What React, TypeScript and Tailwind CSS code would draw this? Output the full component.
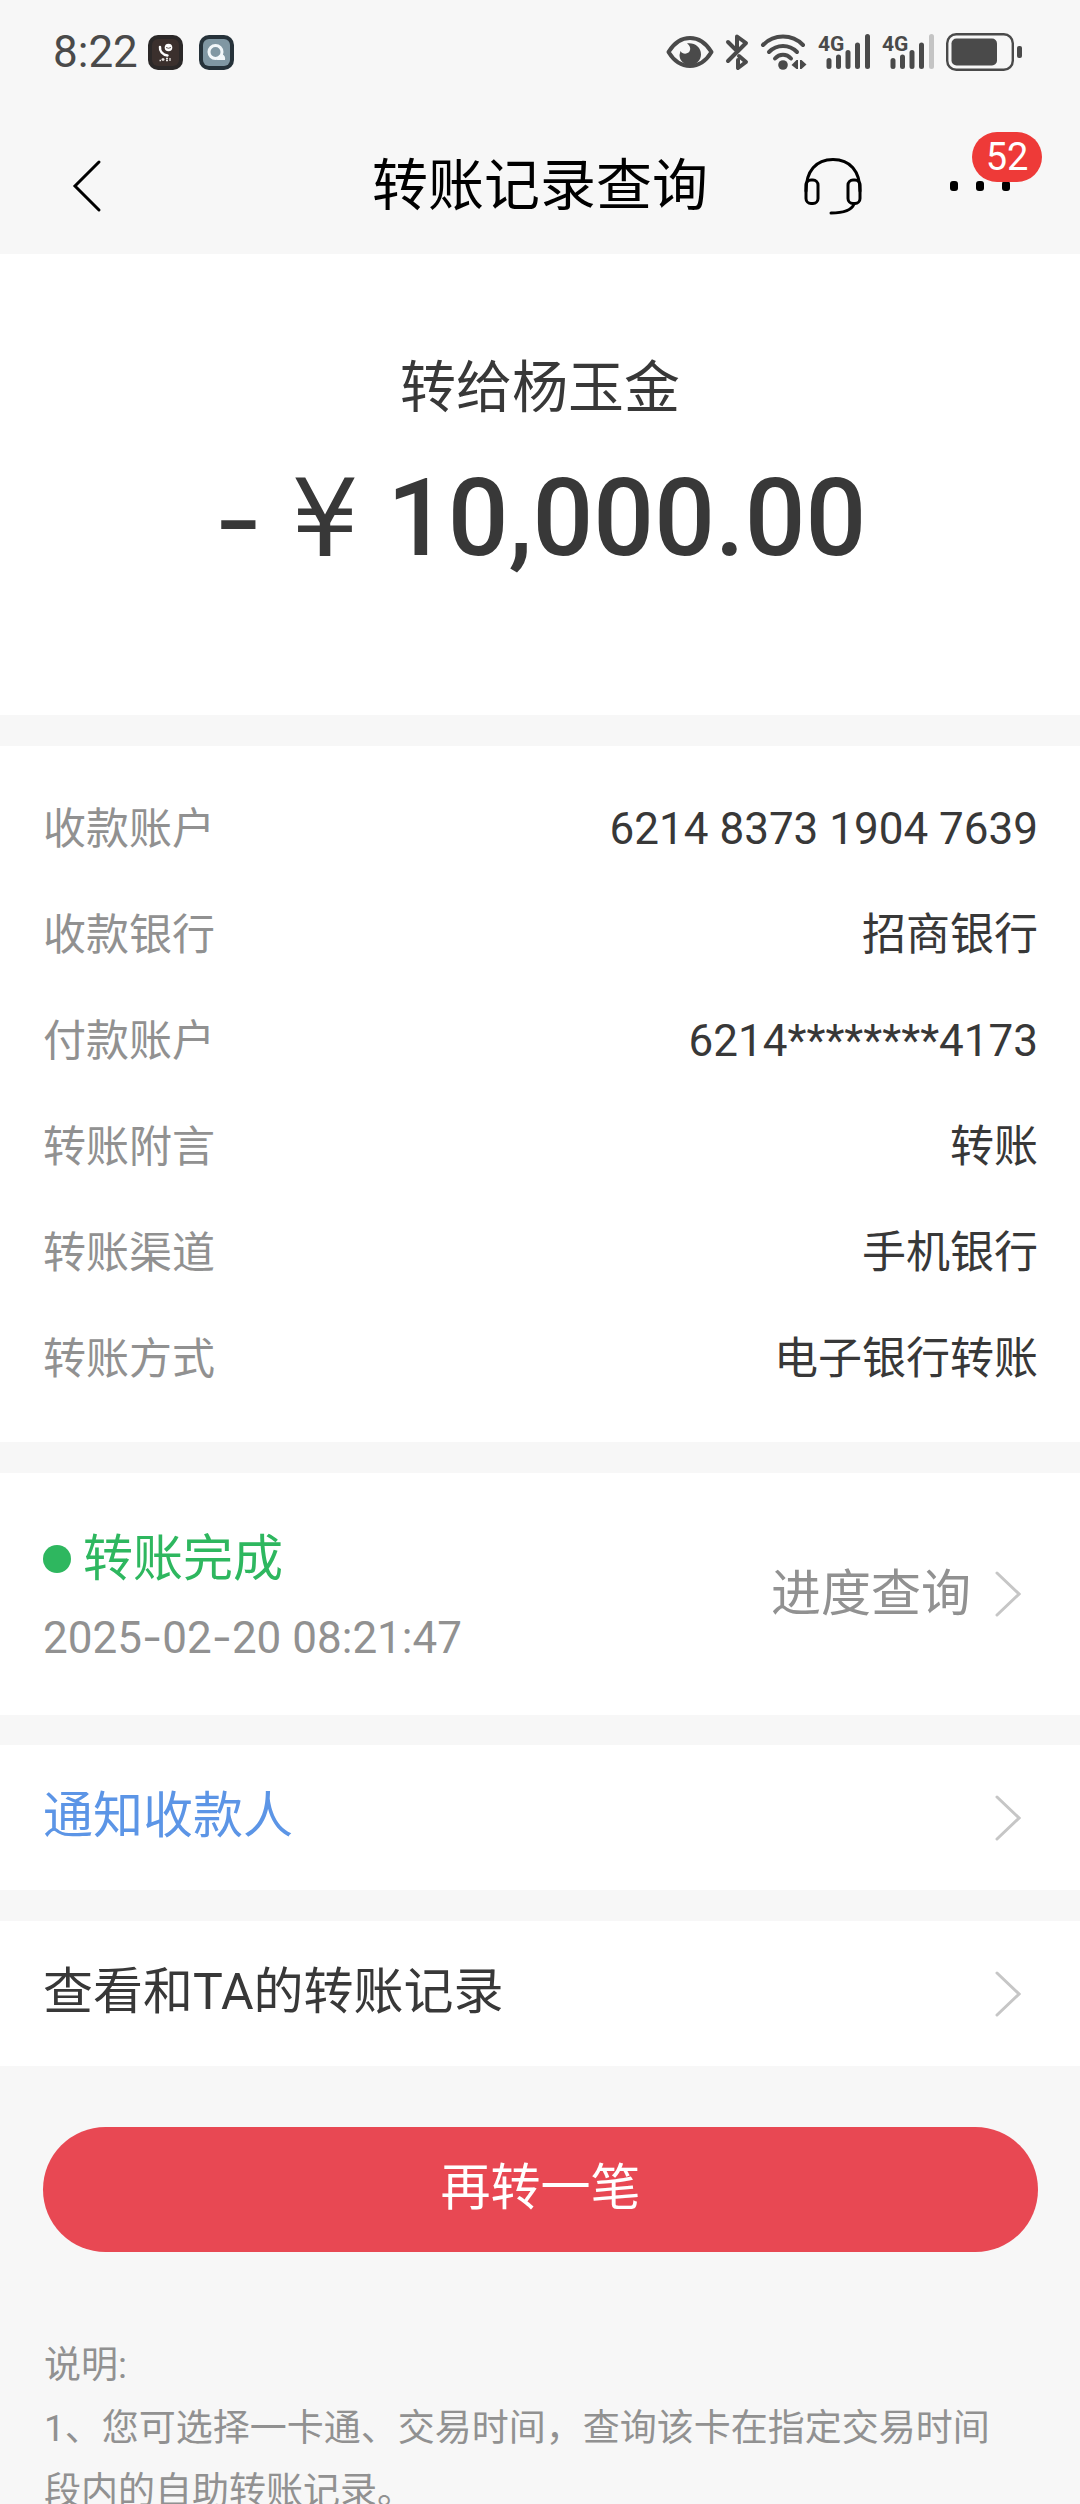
import type { ReactNode } from 'react';

const details = [
  { label: '收款账户', value: '6214 8373 1904 7639' },
  { label: '收款银行', value: '招商银行' },
  { label: '付款账户', value: '6214********4173' },
  { label: '转账附言', value: '转账' },
  { label: '转账渠道', value: '手机银行' },
  { label: '转账方式', value: '电子银行转账' },
];

function CallAppIcon() {
  return (
    <svg className="w-[35px] h-[35px]" viewBox="0 0 35 35" fill="none">
      <rect width="35" height="35" rx="10" fill="#2b2828" />
      <rect x="4" y="4" width="27" height="27" rx="6" fill="#3b302d" />
      <path d="M12 12c-.5 4 2.500 8 7.500 8.500" stroke="#fff" strokeWidth="2.500" strokeLinecap="round" />
      <circle cx="20.500" cy="12.500" r="3.800" fill="#fff" />
      <path d="M18 12.500q2.500 1.500 5 0" stroke="#3b302d" strokeWidth="0.800" />
      <path d="M11.500 25.500h1.500M15 23v3M13.500 24.500h3M18 23.500h2M18 25.500h2M22 23v3" stroke="#e8e4e2" strokeWidth="1.300" />
    </svg>
  );
}

function ChatAppIcon() {
  return (
    <svg className="w-[35px] h-[35px]" viewBox="0 0 35 35" fill="none">
      <rect width="35" height="35" rx="10" fill="#26323a" />
      <rect x="4" y="4" width="27" height="27" rx="6" fill="#8097a3" />
      <circle cx="16.500" cy="17" r="6.500" stroke="#f2f7fa" strokeWidth="3" />
      <path d="M18 25c0-3.500 2.500-6 5.500-5.500 2 .5 3 3 2.500 5.500z" fill="#f2f7fa" />
    </svg>
  );
}

function EyeIcon() {
  return (
    <svg className="w-[48px] h-[34px]" viewBox="0 0 48 34" fill="none">
      <path
        d="M2.500 17C8 8 15.500 3 24 3s16 5 21.500 14C40 26 32.500 31 24 31S8 26 2.500 17z"
        stroke="#4a4a4a"
        strokeWidth="4"
        strokeLinejoin="round"
      />
      <path d="M21 8.500c8-1 14 4 14 11 0 5.500-4.500 10.500-11 10.500-6 0-10.500-4.500-10.500-10l1-4c1.500 2.800 5.500 3.500 8 1.500s2.500-6.500-1.500-9z" fill="#4a4a4a" />
    </svg>
  );
}

function BluetoothIcon() {
  return (
    <svg className="w-[24px] h-[38px]" viewBox="0 0 24 38" fill="none" stroke="#4a4a4a" strokeWidth="4" strokeLinecap="round" strokeLinejoin="round">
      <path d="M3 9l9 9V3.500L21 10 3 28" />
      <path d="M14 23l7 6-8 6v-8" />
    </svg>
  );
}

function WifiIcon() {
  return (
    <svg className="w-[47px] h-[38px]" viewBox="0 0 47 38" fill="none">
      <g stroke="#4a4a4a" strokeWidth="4" strokeLinecap="round">
        <path d="M3 12C14 .8 32 .8 43 12" />
        <path d="M9 19c8-8 20-8 28 0" />
        <path d="M15 25.500c4.500-5 11.500-5 16 0" />
      </g>
      <circle cx="23" cy="32" r="4.800" fill="#4a4a4a" />
      <path d="M38 27v9h-1.500l-5-4 5-5zM40 27h1.500l5 4.500-5 4.500H40z" fill="#4a4a4a" />
    </svg>
  );
}

function SignalIcon({ lastBar }: { lastBar: string }) {
  return (
    <svg className="w-[53px] h-[38px] overflow-visible" viewBox="0 0 53 38" fill="none" strokeWidth="5" strokeLinecap="round">
      <text x="0" y="18" fill="#4a4a4a" className="font-['Roboto',sans-serif] text-[21px] font-bold">
        4G
      </text>
      <path d="M11 27.500v6M20.500 24v9.500M30 19.500v14M39.500 12v21.500" stroke="#4a4a4a" />
      <path d="M49.500 3.500v30" stroke={lastBar} />
    </svg>
  );
}

function BatteryIcon() {
  return (
    <svg className="w-[76px] h-[38px]" viewBox="0 0 76 38" fill="none">
      <rect x="1.200" y="1.200" width="65.600" height="35.600" rx="9" stroke="#4a4a4a" strokeWidth="2.400" />
      <rect x="5.500" y="5.500" width="45.500" height="27" rx="5" fill="#4a4a4a" />
      <rect x="71" y="13" width="5" height="12" rx="2" fill="#4a4a4a" />
    </svg>
  );
}

function HeadsetIcon() {
  return (
    <svg className="w-[58px] h-[58px]" viewBox="0 0 58 58" fill="none" stroke="#000" strokeWidth="3" strokeLinecap="round">
      <path d="M2 34C2 14 12 2.500 29 2.500S56 14 56 34" />
      <rect x="2" y="23" width="12" height="23.500" rx="5" />
      <rect x="44" y="23" width="12" height="23.500" rx="5" />
      <path d="M50 47c-2.500 6.500-10 9-23 9" />
    </svg>
  );
}

function Chevron() {
  return (
    <svg className="w-[26px] h-[46px] shrink-0" viewBox="0 0 26 46" fill="none" stroke="#c6c6c6" strokeWidth="3" strokeLinecap="round">
      <path d="M2 2l22 21L2 44" />
    </svg>
  );
}

// Inter has the wide, thin hyphen used between numbers
function Dash() {
  return <span className="font-['Inter',sans-serif] font-normal">-</span>;
}

function LinkRow({ className, children }: { className: string; children: ReactNode }) {
  return (
    <a href="#" className={`flex items-center justify-between bg-white h-[145px] pl-[43px] pr-[59px] ${className}`}>
      <span className="text-[50px] leading-[74px] pb-1">{children}</span>
      <Chevron />
    </a>
  );
}

export default function App() {
  return (
    <div className="h-screen flex flex-col overflow-hidden bg-[#f7f7f7] text-[#383838] font-['Roboto','Noto_Sans_CJK_SC',sans-serif]">
      {/* Status bar */}
      <div className="h-[104px] shrink-0 flex items-center justify-between pl-[53px] pr-[58px]">
        <div className="flex items-center">
          <span className="text-[44px] leading-[52px] text-[#4a4a4a]">8:22</span>
          <div className="flex gap-4 ml-[10px]">
            <CallAppIcon />
            <ChatAppIcon />
          </div>
        </div>
        <div className="flex items-center gap-[11px]">
          <EyeIcon />
          <BluetoothIcon />
          <WifiIcon />
          <SignalIcon lastBar="#4a4a4a" />
          <SignalIcon lastBar="#c4c4c4" />
          <BatteryIcon />
        </div>
      </div>

      {/* Nav bar */}
      <header className="h-[150px] shrink-0 grid grid-cols-[1fr_auto_1fr] items-center px-[70px] pt-[14px] text-black">
        <button type="button" aria-label="返回" className="justify-self-start">
          <svg className="w-[34px] h-[54px]" viewBox="0 0 34 54" fill="none" stroke="#000" strokeWidth="3" strokeLinecap="round">
            <path d="M29 3L5 27l24 24" />
          </svg>
        </button>
        <h1 className="text-[56px] leading-[84px]">转账记录查询</h1>
        <div className="flex items-center justify-self-end gap-[88px]">
          <button type="button" aria-label="客服">
            <HeadsetIcon />
          </button>
          <button type="button" aria-label="更多" className="relative flex gap-[18px] h-[58px] items-center">
            <span className="w-2 h-[10px] rounded-[3px] bg-black" />
            <span className="w-2 h-[10px] rounded-[3px] bg-black" />
            <span className="w-2 h-[10px] rounded-[3px] bg-black" />
            <span className="absolute left-[22px] -top-[25px] w-[70px] h-[50px] rounded-full bg-[#ee3a38] text-white text-[38px] leading-[50px] text-center">
              52
            </span>
          </button>
        </div>
      </header>

      <main className="flex-1 min-h-0 overflow-y-auto [scrollbar-width:none]">
        {/* Amount */}
        <section className="h-[461px] bg-white pt-[92px] text-center">
          <h2 className="text-[56px] leading-[84px]">转给杨玉金</h2>
          <p className="flex justify-center items-center gap-7 mt-6 text-[107px] leading-[130px] font-medium">
            <Dash />
            <span className="font-['DejaVu_Sans',sans-serif] font-normal">¥</span>
            <span>10,000.00</span>
          </p>
        </section>

        {/* Transfer details */}
        <dl className="mt-[31px] bg-white h-[696px] pt-[50px] pl-[43px] pr-[42px] flex flex-col gap-10 text-[44px] leading-[66px]">
          {details.map((item) => (
            <div key={item.label} className="flex justify-between">
              <dt className="text-[43px] text-[#919191]">{item.label}</dt>
              <dd>{item.value}</dd>
            </div>
          ))}
        </dl>

        {/* Status */}
        <section className="mt-[31px] bg-white h-[242px] pt-1 pl-[43px] pr-[59px] flex items-center justify-between">
          <div>
            <div className="flex items-center gap-3 text-[50px] leading-[74px] text-[#2eb75f]">
              <span className="w-[28px] h-[28px] rounded-full bg-[#2eb75f]" />
              转账完成
            </div>
            <time className="block mt-2 text-[44px] leading-[66px] text-[#919191]">
              2025<Dash />02<Dash />20 08:21:47
            </time>
          </div>
          <a href="#" className="flex items-center gap-6 pb-1 text-[50px] leading-[74px] text-[#919191]">
            进度查询
            <Chevron />
          </a>
        </section>

        <nav className="mt-[30px] flex flex-col gap-[31px]">
          <LinkRow className="text-[#5c95e6]">通知收款人</LinkRow>
          <LinkRow className="text-[#383838]">查看和TA的转账记录</LinkRow>
        </nav>

        <div className="pl-[43px] pr-[42px] pt-[61px]">
          <button type="button" className="w-full h-[125px] pb-1 rounded-full bg-[#e84853] text-white text-[50px] leading-[74px]">
            再转一笔
          </button>
        </div>

        {/* Notes */}
        <div className="pt-[82px] pl-[44px] pr-[60px] text-[37px] leading-[63px] text-[#919191]">
          <p>说明:</p>
          <p>1、您可选择一卡通、交易时间，查询该卡在指定交易时间段内的自助转账记录。</p>
        </div>
      </main>
    </div>
  );
}
